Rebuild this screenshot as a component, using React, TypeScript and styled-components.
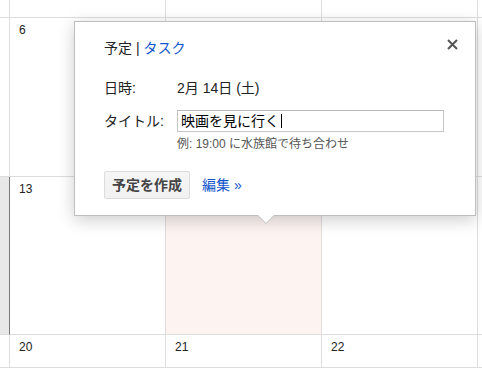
import styled, { createGlobalStyle } from 'styled-components';

const GlobalStyle = createGlobalStyle`
  html, body {
    margin: 0;
    padding: 0;
    background: #fff;
  }

  body {
    font-family: 'Liberation Sans', Arial, 'Noto Sans CJK JP', sans-serif;
    color: #222;
  }

  * {
    box-sizing: border-box;
  }
`;

const Page = styled.div`
  position: relative;

  width: 482px;
  height: 368px;
  overflow: hidden;
`;

const MonthGrid = styled.div`
  display: grid;
  grid-template-columns: 10px 156px 156px 156px 1fr;
  grid-template-rows: 18px 159px 158px 1fr;

  height: 100%;
`;

type Shade = 'plain' | 'edge' | 'edgeActive' | 'today';

const Cell = styled.div<{ $shade: Shade }>`
  padding: ${({ $shade }) => ($shade === 'edge' || $shade === 'edgeActive' ? '0' : '5px 0 0 9px')};
  border-right: 1px solid ${({ $shade }) => ($shade === 'edgeActive' ? '#787878' : '#dddddd')};
  border-bottom: 1px solid #dddddd;

  font-size: 12px;
  line-height: 14px;
  color: #222;
  background: ${({ $shade }) =>
    $shade === 'edgeActive' ? '#e8e8e8' : $shade === 'today' ? '#fdf4f2' : '#fff'};
`;

const Bubble = styled.div`
  position: absolute;
  left: 74px;
  top: 21px;

  width: 402px;
  padding: 16px 30px 16px 29px;
  border: 1px solid #bebebe;

  background: #fff;
  box-shadow: 0 4px 16px rgba(0, 0, 0, 0.2);

  font-size: 14px;
  color: #222;

  &::before,
  &::after {
    content: '';
    position: absolute;
    left: 183px;

    width: 0;
    height: 0;
    border-left: 8px solid transparent;
    border-right: 8px solid transparent;
  }

  &::before {
    top: calc(100% + 1px);
    border-top: 8px solid #bebebe;
  }

  &::after {
    top: 100%;
    border-top: 8px solid #fff;
  }
`;

const CloseButton = styled.button`
  position: absolute;
  left: 372px;
  top: 17px;

  display: flex;
  width: 11px;
  height: 11px;
  padding: 0;
  border: 0;

  background: none;
  cursor: pointer;
`;

const Tabs = styled.div`
  height: 20px;
  line-height: 20px;

  .link {
    color: #1155cc;
  }
`;

const Row = styled.div<{ $gap: number }>`
  display: flex;
  align-items: center;

  margin-top: ${({ $gap }) => $gap}px;
  line-height: 20px;
`;

const Label = styled.span`
  flex: none;
  width: 73px;
`;

const TitleField = styled.div`
  display: flex;
  align-items: center;

  width: 267px;
  height: 22px;
  padding: 0 3px;
  border: 1px solid #c6c6c6;
  border-top-color: #b9b9b9;

  font-size: 14px;
  color: #000;
`;

const Caret = styled.span`
  display: inline-block;

  width: 1px;
  height: 14px;
  margin-left: 2px;

  background: #000;
`;

const Hint = styled.div`
  margin: 4px 0 0 73px;

  font-size: 12px;
  line-height: 16px;
  color: #555;
`;

const Actions = styled.div`
  display: flex;
  align-items: center;
  gap: 12px;

  margin-top: 19px;
`;

const CreateButton = styled.button`
  height: 28px;
  padding: 0 7px;
  border: 1px solid #dcdcdc;
  border-radius: 2px;

  background: linear-gradient(#f5f5f5, #f1f1f1);

  font-family: inherit;
  font-weight: 700;
  font-size: 14px;
  line-height: 20px;
  white-space: nowrap;
  color: #444;
`;

const EditLink = styled.a`
  font-size: 14px;
  line-height: 20px;
  color: #1155cc;
  text-decoration: none;
`;

// days hidden under the bubble are left out (null)
const weeks: { edge: Shade; days: (number | null)[] }[] = [
  { edge: 'edge', days: [null, null, null, null] },
  { edge: 'edge', days: [6, null, null, null] },
  { edge: 'edgeActive', days: [13, null, null, null] },
  { edge: 'edge', days: [20, 21, 22, null] },
];

const App = () => {
  return (
    <>
      <GlobalStyle />
      <Page>
        <MonthGrid>
          {weeks.map((week, w) => [
            <Cell key={`e${w}`} $shade={week.edge} />,
            ...week.days.map((day, d) => (
              <Cell key={`${w}-${d}`} $shade={w === 2 && d === 1 ? 'today' : 'plain'}>
                {day}
              </Cell>
            )),
          ])}
        </MonthGrid>

        <Bubble>
          <CloseButton type='button' aria-label='閉じる'>
            <svg width='11' height='11' viewBox='0 0 11 11'>
              <path d='M1 1 L10 10 M10 1 L1 10' stroke='#555' strokeWidth='2' />
            </svg>
          </CloseButton>

          <Tabs>
            予定 | <span className='link'>タスク</span>
          </Tabs>

          <Row $gap={20}>
            <Label>日時:</Label>
            <span>2月 14日 (土)</span>
          </Row>

          <Row $gap={12}>
            <Label>タイトル:</Label>
            <TitleField>
              映画を見に行く
              <Caret />
            </TitleField>
          </Row>
          <Hint>例: 19:00 に水族館で待ち合わせ</Hint>

          <Actions>
            <CreateButton type='button'>予定を作成</CreateButton>
            <EditLink href='#'>編集 »</EditLink>
          </Actions>
        </Bubble>
      </Page>
    </>
  );
};

export default App;
